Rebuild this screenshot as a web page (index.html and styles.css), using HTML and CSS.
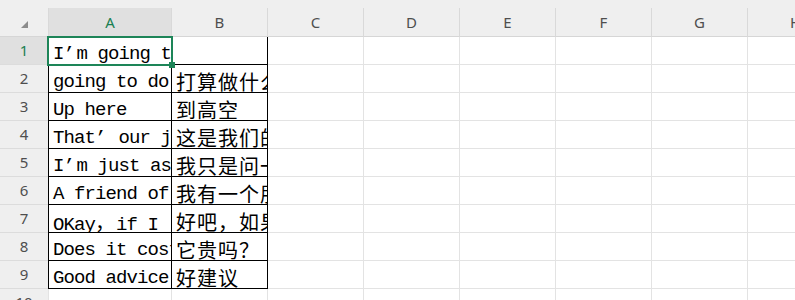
FILE: index.html
```html
<!DOCTYPE html>
<html>
<head>
  <title>Sheet1</title>
  <meta name="viewport" content="width=device-width, initial-scale=1">
  <link rel="stylesheet" href="styles.css">
</head>
<body>
  <div class="sheet">
    <div class="topbar"></div>

    <div class="row head">
      <div class="corner">
        <svg width="7" height="7" viewBox="0 0 7 7"><polygon points="7,0 7,7 0,7" fill="#8c8c8c"/></svg>
      </div>
      <div class="col col-a active">A</div>
      <div class="col">B</div>
      <div class="col">C</div>
      <div class="col">D</div>
      <div class="col">E</div>
      <div class="col">F</div>
      <div class="col">G</div>
      <div class="col">H</div>
    </div>

    <div class="row">
      <div class="num active">1</div>
      <div class="cell a sel"><div class="txt">I<span class="q">’</span>m going to take a balloon</div></div>
      <div class="cell b"><div class="txt"></div></div>
      <div class="cell"></div><div class="cell"></div><div class="cell"></div><div class="cell"></div><div class="cell"></div><div class="cell"></div>
    </div>

    <div class="row">
      <div class="num">2</div>
      <div class="cell a"><div class="txt">going to do what</div></div>
      <div class="cell b"><div class="txt cjk">打算做什么？</div></div>
      <div class="cell"></div><div class="cell"></div><div class="cell"></div><div class="cell"></div><div class="cell"></div><div class="cell"></div>
    </div>

    <div class="row">
      <div class="num">3</div>
      <div class="cell a"><div class="txt">Up here</div></div>
      <div class="cell b"><div class="txt cjk">到高空</div></div>
      <div class="cell"></div><div class="cell"></div><div class="cell"></div><div class="cell"></div><div class="cell"></div><div class="cell"></div>
    </div>

    <div class="row">
      <div class="num">4</div>
      <div class="cell a"><div class="txt">That<span class="q">’</span> our job</div></div>
      <div class="cell b"><div class="txt cjk">这是我们的工作</div></div>
      <div class="cell"></div><div class="cell"></div><div class="cell"></div><div class="cell"></div><div class="cell"></div><div class="cell"></div>
    </div>

    <div class="row">
      <div class="num">5</div>
      <div class="cell a"><div class="txt">I<span class="q">’</span>m just asking</div></div>
      <div class="cell b"><div class="txt cjk">我只是问一下</div></div>
      <div class="cell"></div><div class="cell"></div><div class="cell"></div><div class="cell"></div><div class="cell"></div><div class="cell"></div>
    </div>

    <div class="row">
      <div class="num">6</div>
      <div class="cell a"><div class="txt">A friend of mine</div></div>
      <div class="cell b"><div class="txt cjk">我有一个朋友</div></div>
      <div class="cell"></div><div class="cell"></div><div class="cell"></div><div class="cell"></div><div class="cell"></div><div class="cell"></div>
    </div>

    <div class="row">
      <div class="num">7</div>
      <div class="cell a"><div class="txt">OKay<span class="cjk">，</span>if I</div></div>
      <div class="cell b"><div class="txt cjk">好吧，如果我去</div></div>
      <div class="cell"></div><div class="cell"></div><div class="cell"></div><div class="cell"></div><div class="cell"></div><div class="cell"></div>
    </div>

    <div class="row">
      <div class="num">8</div>
      <div class="cell a"><div class="txt">Does it cost much</div></div>
      <div class="cell b"><div class="txt cjk">它贵吗？</div></div>
      <div class="cell"></div><div class="cell"></div><div class="cell"></div><div class="cell"></div><div class="cell"></div><div class="cell"></div>
    </div>

    <div class="row">
      <div class="num">9</div>
      <div class="cell a"><div class="txt">Good advice</div></div>
      <div class="cell b"><div class="txt cjk">好建议</div></div>
      <div class="cell"></div><div class="cell"></div><div class="cell"></div><div class="cell"></div><div class="cell"></div><div class="cell"></div>
    </div>

    <div class="row">
      <div class="num">10</div>
      <div class="cell wide"></div>
      <div class="cell"></div>
      <div class="cell"></div><div class="cell"></div><div class="cell"></div><div class="cell"></div><div class="cell"></div><div class="cell"></div>
    </div>
  </div>
</body>
</html>
```

FILE: styles.css
```css
* { box-sizing: border-box; }
body { margin: 0; width: 795px; height: 300px; overflow: hidden; background: #fff; font-family: "Noto Sans", sans-serif; }
.sheet { width: 900px; }
.topbar { height: 8px; background: #efefef; }

.row { display: flex; height: 28px; }
.row.head { height: 29px; background: #efefef; }

.corner { flex: none; width: 48px; display: flex; justify-content: center; align-items: center; padding: 5px 0 0 0; border-bottom: 1px solid #d6d6d6; }
.col { flex: none; width: 96px; text-align: center; font-size: 15px; line-height: 28px; color: #4e4e4e; border-right: 1px solid #d9d9d9; border-bottom: 1px solid #d6d6d6; }
.col-a { width: 124px; border-left: 1px solid #d9d9d9; }
.col.active, .num.active { background: #e0e0e0; color: #1a7f52; }

.num { flex: none; width: 48px; background: #efefef; text-align: center; font-size: 15px; line-height: 27px; color: #4e4e4e; border-bottom: 1px solid #dcdcdc; }

.cell { flex: none; width: 96px; border-right: 1px solid #e3e3e3; border-bottom: 1px solid #e3e3e3; }
.cell.wide { width: 124px; border-left: 1px solid #e3e3e3; }
.cell.a { width: 124px; border-left: 1px solid #000; border-right: 1px solid #000; border-bottom: 1px solid #000; }
.cell.b { border-right: 1px solid #000; border-bottom: 1px solid #000; }

.txt { height: 100%; overflow: hidden; white-space: nowrap; padding: 6px 0 0 4px; font-family: "Liberation Mono", monospace; font-size: 19px; letter-spacing: -0.9px; line-height: 22px; color: #000; }
.cjk { font-family: "Noto Sans CJK SC", sans-serif; font-size: 20px; letter-spacing: 1px; }
.q { margin-right: 2.5px; }

.sel { position: relative; }
.sel::after { content: ""; position: absolute; top: -1px; left: -2px; right: -2px; bottom: -2px; border: 2px solid #1d8558; z-index: 2; }
.sel::before { content: ""; position: absolute; right: -4px; bottom: -4px; width: 6px; height: 6px; background: #1d8558; z-index: 3; }
```
